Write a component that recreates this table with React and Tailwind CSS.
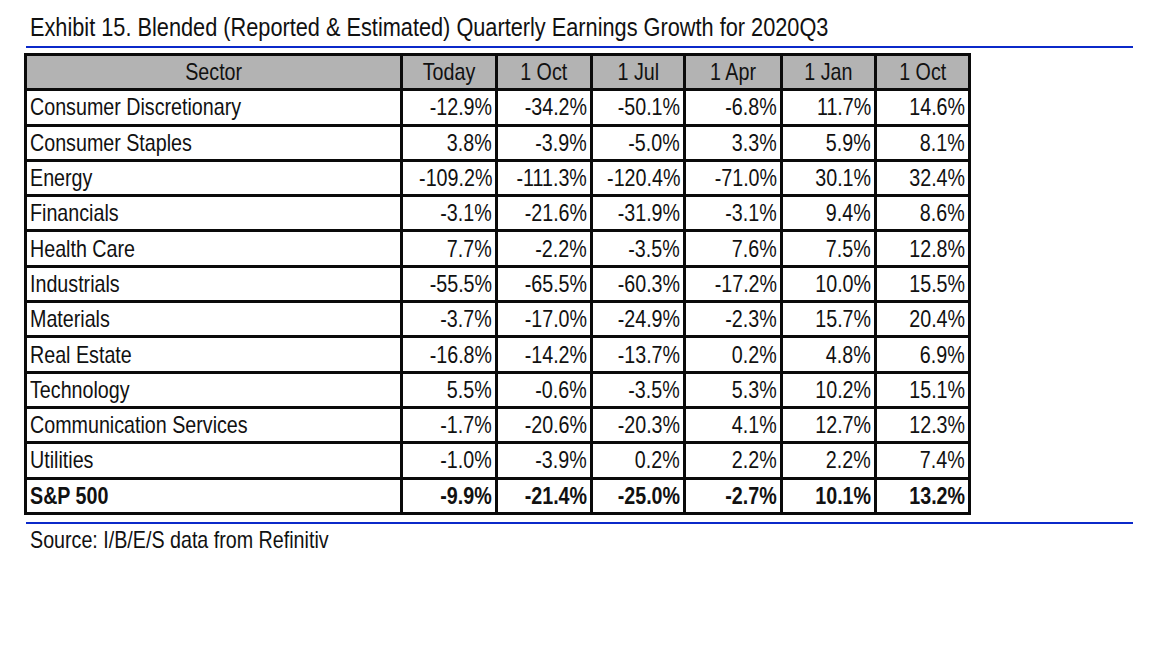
const headers = ["Sector", "Today", "1 Oct", "1 Jul", "1 Apr", "1 Jan", "1 Oct"]

const rows = [
  ["Consumer Discretionary", "-12.9%", "-34.2%", "-50.1%", "-6.8%", "11.7%", "14.6%"],
  ["Consumer Staples", "3.8%", "-3.9%", "-5.0%", "3.3%", "5.9%", "8.1%"],
  ["Energy", "-109.2%", "-111.3%", "-120.4%", "-71.0%", "30.1%", "32.4%"],
  ["Financials", "-3.1%", "-21.6%", "-31.9%", "-3.1%", "9.4%", "8.6%"],
  ["Health Care", "7.7%", "-2.2%", "-3.5%", "7.6%", "7.5%", "12.8%"],
  ["Industrials", "-55.5%", "-65.5%", "-60.3%", "-17.2%", "10.0%", "15.5%"],
  ["Materials", "-3.7%", "-17.0%", "-24.9%", "-2.3%", "15.7%", "20.4%"],
  ["Real Estate", "-16.8%", "-14.2%", "-13.7%", "0.2%", "4.8%", "6.9%"],
  ["Technology", "5.5%", "-0.6%", "-3.5%", "5.3%", "10.2%", "15.1%"],
  ["Communication Services", "-1.7%", "-20.6%", "-20.3%", "4.1%", "12.7%", "12.3%"],
  ["Utilities", "-1.0%", "-3.9%", "0.2%", "2.2%", "2.2%", "7.4%"],
]

const total = ["S&P 500", "-9.9%", "-21.4%", "-25.0%", "-2.7%", "10.1%", "13.2%"]

// no narrow font installed, so squeeze Liberation Sans to Arial Narrow widths
function Row({ cells, bold }) {
  return cells.map((c, i) => (
    <div
      key={i}
      className={
        "bg-white flex items-center leading-none whitespace-nowrap " +
        (i === 0 ? "justify-start pl-[3px] " : "justify-end pr-[3px] ") +
        (bold ? "font-bold" : "")
      }
    >
      <span className={"inline-block scale-x-[0.82] " + (i === 0 ? "origin-left" : "origin-right")}>{c}</span>
    </div>
  ))
}

export default function App() {
  return (
    <div className="w-[1152px] h-[648px] bg-white text-[#111] font-['Liberation_Sans',Arial,sans-serif] text-[24px]">
      <div className="pl-[26px] pt-[12px]">
        <div className="w-[1107px]">
          <div className="h-[30px] leading-[30px] pl-[4px] text-[26.5px] whitespace-nowrap">
            <span className="inline-block scale-x-[0.82] origin-left">
              Exhibit 15. Blended (Reported &amp; Estimated) Quarterly Earnings Growth for 2020Q3
            </span>
          </div>
          <div className="mt-[4px] h-[2px] bg-[#0b29c9]" />
        </div>

        <div className="-ml-[2px] mt-[5px] w-[947px] border-[3px] border-[#0a0a0a] bg-[#0a0a0a] grid grid-cols-[373px_92px_92px_90px_94px_91px_91px] grid-rows-[repeat(13,32.3px)] gap-[3px]">
          {headers.map((h, i) => (
            <div key={i} className="bg-[#b3b3b3] flex items-center justify-center leading-none whitespace-nowrap">
              <span className="inline-block scale-x-[0.82]">{h}</span>
            </div>
          ))}
          {rows.map((r, i) => (
            <Row key={i} cells={r} />
          ))}
          <Row cells={total} bold />
        </div>

        <div className="w-[1107px] mt-[7px] h-[2px] bg-[#0b29c9]" />
        <div className="h-[28px] leading-[28px] pl-[4px] mt-[2px] whitespace-nowrap">
          <span className="inline-block scale-x-[0.82] origin-left">Source: I/B/E/S data from Refinitiv</span>
        </div>
      </div>
    </div>
  )
}
